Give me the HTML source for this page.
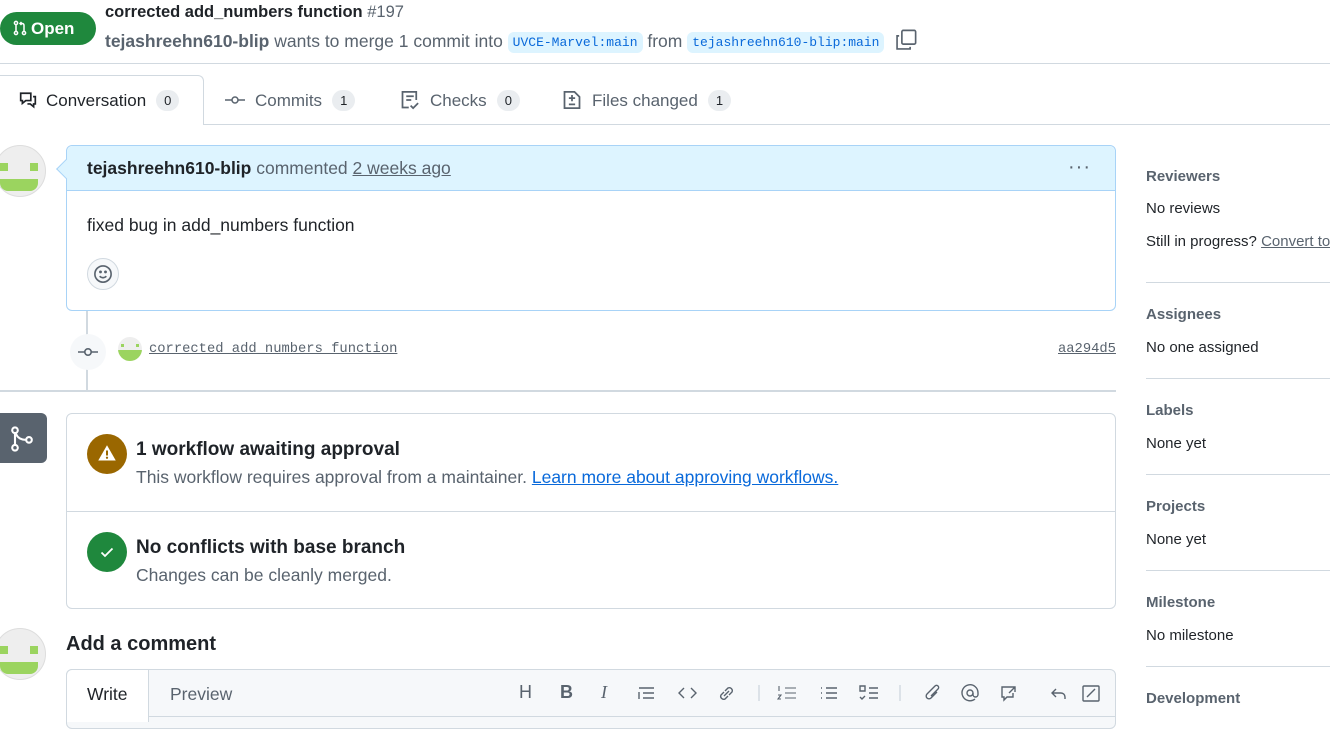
<!DOCTYPE html>
<html><head><meta charset="utf-8"><style>
*{box-sizing:border-box;margin:0;padding:0}
body{width:1330px;height:722px;overflow:hidden;background:#fff;font-family:"Liberation Sans",sans-serif;color:#1f2328;position:relative;font-size:14px}
.a{position:absolute;white-space:nowrap}
.mono{font-family:"Liberation Mono",monospace}
.cnt{display:inline-block;background:#eaedf0;border-radius:12px;font-size:13px;padding:3px 8px;margin-left:10px;font-weight:400;color:#1f2328;vertical-align:1px}
.tab{font-size:17px;color:#59636e}
.sb{color:#59636e;font-size:15px;font-weight:600}
.sv{font-size:15px;color:#1f2328}
.hr{position:absolute;left:1146px;width:184px;height:1px;background:#d1d9e0}
.av{position:absolute;border-radius:50%;background:#eee;overflow:hidden;border:1px solid #ddd}
</style></head><body>
<!-- header -->
<div class="a" style="left:0;top:12px;width:96px;height:33px;background:#1f883d;border-radius:17px;color:#fff;font-weight:700;font-size:17px;line-height:33px;padding-left:12px">
<svg width="16" height="16" viewBox="0 0 16 16" style="vertical-align:-2px;margin-right:3px" fill="none" stroke="#fff" stroke-width="1.5"><circle cx="4" cy="3" r="1.6"/><circle cx="4" cy="13" r="1.6"/><circle cx="12" cy="13" r="1.6"/><path d="M4 5v6M12 11V5.5Q12 3.5 10 3.5H8M9.5 2 8 3.5 9.5 5"/></svg>Open</div>
<div class="a" style="left:105px;top:3px;font-size:16.5px;font-weight:700">corrected add_numbers function <span style="font-weight:400;color:#59636e">#197</span></div>
<div class="a" style="left:105px;top:29px;font-size:17.5px;color:#59636e"><b style="color:#59636e">tejashreehn610-blip</b> wants to merge 1 commit into <span class="mono" style="background:#ddf4ff;color:#0969da;font-size:13px;padding:3px 5px;border-radius:6px;vertical-align:1px">UVCE-Marvel:main</span> from <span class="mono" style="background:#ddf4ff;color:#0969da;font-size:13px;padding:3px 5px;border-radius:6px;vertical-align:1px">tejashreehn610-blip:main</span>
<svg width="22" height="22" viewBox="0 0 16 16" style="vertical-align:-4px;margin-left:6px" fill="none" stroke="#59636e" stroke-width="1.2"><rect x="5" y="1" width="10" height="10" rx="1"/><path d="M3 5H1.5v9.5H11V13"/></svg></div>
<div class="a" style="left:0;top:63px;width:1330px;height:1px;background:#d1d9e0"></div>
<!-- tabs -->
<div class="a" style="left:0;top:124px;width:1330px;height:1px;background:#d1d9e0"></div>
<div class="a" style="left:0;top:75px;width:204px;height:50px;border:1px solid #d1d9e0;border-bottom:none;border-left:none;border-radius:0 6px 0 0;background:#fff"></div>
<div class="a tab" style="left:18px;top:90px;color:#1f2328"><svg width="20" height="18" viewBox="0 0 16 16" style="vertical-align:-3px;margin-right:8px" fill="none" stroke="#1f2328" stroke-width="1.5"><path d="M1.5 2h9v6.5H6L3 11V8.5H1.5zM12.5 5h2v6.5H13V14l-3-2.5H7.5"/></svg>Conversation<span class="cnt">0</span></div>
<div class="a tab" style="left:225px;top:90px"><svg width="20" height="16" viewBox="0 0 20 16" style="vertical-align:-2px;margin-right:10px" fill="none" stroke="#59636e" stroke-width="1.5"><circle cx="10" cy="8" r="3"/><path d="M0 8h7M13 8h7"/></svg>Commits<span class="cnt">1</span></div>
<div class="a tab" style="left:400px;top:90px"><svg width="20" height="20" viewBox="0 0 16 16" style="vertical-align:-4px;margin-right:10px" fill="none" stroke="#59636e" stroke-width="1.4"><path d="M7 14H2V1.5h11V8M5 5h6M5 8h4M8.5 12.5l2 2 4-4"/></svg>Checks<span class="cnt">0</span></div>
<div class="a tab" style="left:562px;top:90px"><svg width="20" height="20" viewBox="0 0 16 16" style="vertical-align:-4px;margin-right:10px" fill="none" stroke="#59636e" stroke-width="1.4"><path d="M2 1.5h8l4 4v9H2zM8 4v5M5.5 6.5h5M5.5 11.5h5"/></svg>Files changed<span class="cnt">1</span></div>
<!-- avatars -->
<div class="av" style="left:-6px;top:145px;width:52px;height:52px"><div style="position:absolute;left:5px;top:17px;width:8px;height:8px;background:#9bd45f"></div><div style="position:absolute;left:35px;top:17px;width:8px;height:8px;background:#9bd45f"></div><div style="position:absolute;left:5px;top:33px;width:38px;height:12px;background:#9bd45f;border-radius:0 0 8px 8px"></div></div>
<!-- timeline -->
<div class="a" style="left:86px;top:310px;width:2px;height:80px;background:#d1d9e0"></div>
<!-- comment -->
<div class="a" style="left:66px;top:145px;width:1050px;height:166px;border:1px solid #a8d3f7;border-radius:6px"></div>
<div class="a" style="left:67px;top:146px;width:1048px;height:45px;background:#ddf4ff;border-bottom:1px solid #a8d3f7;border-radius:6px 6px 0 0"></div>
<div class="a" style="left:59px;top:162px;width:14px;height:14px;background:#ddf4ff;border-left:1px solid #a8d3f7;border-bottom:1px solid #a8d3f7;transform:rotate(45deg)"></div>
<div class="a" style="left:87px;top:158px;font-size:17.5px;color:#59636e"><b style="color:#1f2328">tejashreehn610-blip</b> commented <span style="text-decoration:underline">2 weeks ago</span></div>
<div class="a" style="left:1068px;top:156px;font-size:20px;color:#59636e;letter-spacing:1px">···</div>
<div class="a" style="left:87px;top:215px;font-size:17.5px">fixed bug in add_numbers function</div>
<div class="a" style="left:87px;top:258px;width:32px;height:32px;border-radius:50%;background:#f6f8fa;border:1px solid #d1d9e0"></div>
<svg class="a" style="left:93px;top:264px" width="20" height="20" viewBox="0 0 16 16" fill="none" stroke="#59636e" stroke-width="1.3"><circle cx="8" cy="8" r="6.5"/><path d="M5.3 9.8q2.7 2.4 5.4 0"/><circle cx="6" cy="6.3" r=".5" fill="#59636e"/><circle cx="10" cy="6.3" r=".5" fill="#59636e"/></svg>
<!-- commit row -->
<div class="a" style="left:70px;top:334px;width:36px;height:36px;border-radius:50%;background:#f6f8fa"></div>
<svg class="a" style="left:77px;top:344px" width="22" height="16" viewBox="0 0 22 16" fill="none" stroke="#59636e" stroke-width="1.6"><circle cx="11" cy="8" r="3.2"/><path d="M1 8h6.8M14.2 8H21"/></svg>
<div class="a" style="left:118px;top:337px;width:24px;height:24px;border-radius:50%;background:#eee;overflow:hidden"><div style="position:absolute;left:3px;top:7px;width:3px;height:3px;background:#9bd45f"></div><div style="position:absolute;left:18px;top:7px;width:3px;height:3px;background:#9bd45f"></div><div style="position:absolute;left:0;top:13px;width:24px;height:11px;background:#9bd45f"></div></div>
<div class="a mono" style="left:149px;top:342px;font-size:13.8px;color:#59636e;text-decoration:underline">corrected add_numbers function</div>
<div class="a mono" style="left:1058px;top:342px;font-size:13.8px;color:#59636e;text-decoration:underline">aa294d5</div>
<div class="a" style="left:0;top:390px;width:1116px;height:2px;background:#d1d9e0"></div>
<!-- merge -->
<div class="a" style="left:0;top:413px;width:47px;height:50px;background:#59636e;border-radius:0 6px 6px 0"></div>
<svg class="a" style="left:8px;top:425px" width="28" height="28" viewBox="0 0 16 16" fill="none" stroke="#fff" stroke-width="1.2"><circle cx="4" cy="3" r="1.6"/><circle cx="4" cy="13" r="1.6"/><circle cx="12" cy="8.5" r="1.6"/><path d="M4 4.6v6.8M4.5 5q1.5 3.5 5.9 3.5"/></svg>
<div class="a" style="left:66px;top:413px;width:1050px;height:196px;border:1px solid #d1d9e0;border-radius:6px"></div>
<div class="a" style="left:67px;top:511px;width:1048px;height:1px;background:#d1d9e0"></div>
<div class="a" style="left:87px;top:434px;width:40px;height:40px;border-radius:50%;background:#9a6700"></div>
<svg class="a" style="left:97px;top:443px" width="20" height="20" viewBox="0 0 16 16"><path d="M8 1.8 15 14H1z" fill="#fff"/><path d="M8 6v4" stroke="#9a6700" stroke-width="1.6"/><circle cx="8" cy="11.8" r=".9" fill="#9a6700"/></svg>
<div class="a" style="left:136px;top:439px;font-size:19px;font-weight:700">1 workflow awaiting approval</div>
<div class="a" style="left:136px;top:467px;font-size:17.5px;color:#59636e">This workflow requires approval from a maintainer. <span style="color:#0969da;text-decoration:underline">Learn more about approving workflows.</span></div>
<div class="a" style="left:87px;top:532px;width:40px;height:40px;border-radius:50%;background:#1f883d"></div>
<svg class="a" style="left:99px;top:544px" width="16" height="16" viewBox="0 0 16 16" fill="none" stroke="#fff" stroke-width="1.8"><path d="M2.5 8.5l3.5 3.5 7.5-7.5"/></svg>
<div class="a" style="left:136px;top:537px;font-size:19px;font-weight:700">No conflicts with base branch</div>
<div class="a" style="left:136px;top:565px;font-size:17.5px;color:#59636e">Changes can be cleanly merged.</div>
<!-- add comment -->
<div class="av" style="left:-6px;top:628px;width:52px;height:52px"><div style="position:absolute;left:5px;top:17px;width:8px;height:8px;background:#9bd45f"></div><div style="position:absolute;left:35px;top:17px;width:8px;height:8px;background:#9bd45f"></div><div style="position:absolute;left:5px;top:33px;width:38px;height:12px;background:#9bd45f;border-radius:0 0 8px 8px"></div></div>
<div class="a" style="left:66px;top:633px;font-size:20px;font-weight:700">Add a comment</div>
<div class="a" style="left:66px;top:669px;width:1050px;height:60px;border:1px solid #d1d9e0;border-radius:6px;background:#f6f8fa"></div>
<div class="a" style="left:67px;top:716px;width:1048px;height:1px;background:#d1d9e0"></div>
<div class="a" style="left:66px;top:669px;width:83px;height:53px;background:#fff;border:1px solid #d1d9e0;border-bottom:none;border-radius:6px 0 0 0"></div>
<div class="a" style="left:87px;top:684px;font-size:17.5px">Write</div>
<div class="a" style="left:170px;top:684px;font-size:17.5px;color:#59636e">Preview</div>
<div class="a" style="left:519px;top:682px;font-size:18px;color:#59636e">
<span style="position:absolute;left:0">H</span><span style="position:absolute;left:41px;font-weight:700">B</span><span style="position:absolute;left:82px;font-style:italic;font-family:'Liberation Serif'">I</span>
</div>
<svg class="a" style="left:636px;top:683px" width="470" height="20" viewBox="0 0 470 20" fill="none" stroke="#59636e" stroke-width="1.4">
<path d="M3 5h15M7 10h11M7 15h11M3 9v7"/>
<path d="M48 5l-5 5 5 5M55 5l5 5-5 5"/>
<path d="M89 8l3-3a3 3 0 014 4l-3 3M92 13l-3 3a3 3 0 01-4-4l3-3M88 13l5-5"/>
<path d="M123 2v16" stroke="#d1d9e0"/>
<path d="M149 5h11M149 10h11M149 15h11M143 3v5M142 12h3l-3 4h3" stroke-width="1.1"/>
<path d="M190 5h11M190 10h11M190 15h11M185 5h1M185 10h1M185 15h1"/>
<path d="M224 3h5v5h-5zM233 5h9M233 10h9M233 15h9M224 14l2 2 3-3"/>
<path d="M264 2v16" stroke="#d1d9e0"/>
<path d="M301 9l-6 6a2.5 2.5 0 01-4-4l8-8a2 2 0 013 3l-7 7"/>
<circle cx="334" cy="10" r="3"/><path d="M337 10v1.5a2.5 2.5 0 005 0V10a8 8 0 10-3 6"/>
<path d="M375 4h-9v10h2v3l3-3h6v-4M374 4h5v5M379 4l-6 6"/>
<path d="M420 6l-4 4 4 4M416 10h9a4 4 0 014 4v2"/>
<rect x="447" y="3" width="16" height="15" rx="1"/><path d="M451 14l8-8"/>
</svg>
<!-- sidebar -->
<div class="a sb" style="left:1146px;top:168px">Reviewers</div>
<div class="a sv" style="left:1146px;top:200px">No reviews</div>
<div class="a sv" style="left:1146px;top:233px">Still in progress? <span style="color:#59636e;text-decoration:underline">Convert to draft</span></div>
<div class="hr" style="top:282px"></div>
<div class="a sb" style="left:1146px;top:306px">Assignees</div>
<div class="a sv" style="left:1146px;top:339px">No one assigned</div>
<div class="hr" style="top:378px"></div>
<div class="a sb" style="left:1146px;top:402px">Labels</div>
<div class="a sv" style="left:1146px;top:435px">None yet</div>
<div class="hr" style="top:474px"></div>
<div class="a sb" style="left:1146px;top:498px">Projects</div>
<div class="a sv" style="left:1146px;top:531px">None yet</div>
<div class="hr" style="top:570px"></div>
<div class="a sb" style="left:1146px;top:594px">Milestone</div>
<div class="a sv" style="left:1146px;top:627px">No milestone</div>
<div class="hr" style="top:666px"></div>
<div class="a sb" style="left:1146px;top:690px">Development</div>
</body></html>
